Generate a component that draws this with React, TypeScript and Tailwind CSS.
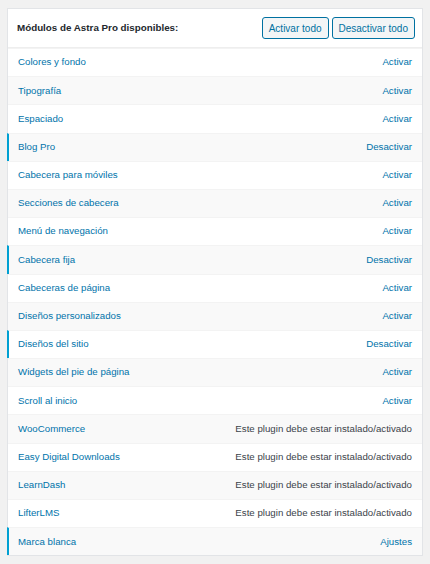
import React from 'react';

interface Module {
  name: string
  action: string
  active?: boolean
  note?: boolean
}

const modules: Module[] = [
  { name: 'Colores y fondo', action: 'Activar' },
  { name: 'Tipografía', action: 'Activar' },
  { name: 'Espaciado', action: 'Activar' },
  { name: 'Blog Pro', action: 'Desactivar', active: true },
  { name: 'Cabecera para móviles', action: 'Activar' },
  { name: 'Secciones de cabecera', action: 'Activar' },
  { name: 'Menú de navegación', action: 'Activar' },
  { name: 'Cabecera fija', action: 'Desactivar', active: true },
  { name: 'Cabeceras de página', action: 'Activar' },
  { name: 'Diseños personalizados', action: 'Activar' },
  { name: 'Diseños del sitio', action: 'Desactivar', active: true },
  { name: 'Widgets del pie de página', action: 'Activar' },
  { name: 'Scroll al inicio', action: 'Activar' },
  { name: 'WooCommerce', action: 'Este plugin debe estar instalado/activado', note: true },
  { name: 'Easy Digital Downloads', action: 'Este plugin debe estar instalado/activado', note: true },
  { name: 'LearnDash', action: 'Este plugin debe estar instalado/activado', note: true },
  { name: 'LifterLMS', action: 'Este plugin debe estar instalado/activado', note: true },
  { name: 'Marca blanca', action: 'Ajustes', active: true },
]

export default function App() {
  return (
    <div className="min-h-[564px] bg-[#f1f1f1] pt-[8px] px-[7px] font-['Liberation_Sans',Arial,sans-serif] text-[9.7px]">
      <div className="border border-[#e2e4e7] bg-white">
        {/* header */}
        <div className="flex h-[39px] items-center justify-between border-b border-[#eeeeee] pl-[9px] pr-[7px]">
          <h3 className="text-[9.8px] font-bold text-[#23282d]">Módulos de Astra Pro disponibles:</h3>
          <div className="flex gap-[3px]">
            <button type="button" className="h-[22px] rounded-[3px] border border-[#0071a1] bg-[#f3f5f6] px-[6px] text-[10px] text-[#0071a1]">
              Activar todo
            </button>
            <button type="button" className="h-[22px] rounded-[3px] border border-[#0071a1] bg-[#f3f5f6] px-[6px] text-[10px] text-[#0071a1]">
              Desactivar todo
            </button>
          </div>
        </div>

        {/* rows */}
        {modules.map((m, i) => (
          <div
            key={m.name}
            className={
              'flex h-[28.2px] items-center justify-between border-t border-[#f3f3f3] pr-[10px] first:border-t-0 ' +
              (i % 2 === 1 ? 'bg-[#f9f9f9] ' : 'bg-white ') +
              (m.active ? '-ml-px border-l-2 border-l-[#00a0d2] pl-[9px]' : 'pl-[10px]')
            }
          >
            <a className="text-[#0073aa]">{m.name}</a>
            {m.note ? (
              <span className="text-[#3c434a]">{m.action}</span>
            ) : (
              <a className="text-[#0073aa]">{m.action}</a>
            )}
          </div>
        ))}
      </div>
    </div>
  )
}
